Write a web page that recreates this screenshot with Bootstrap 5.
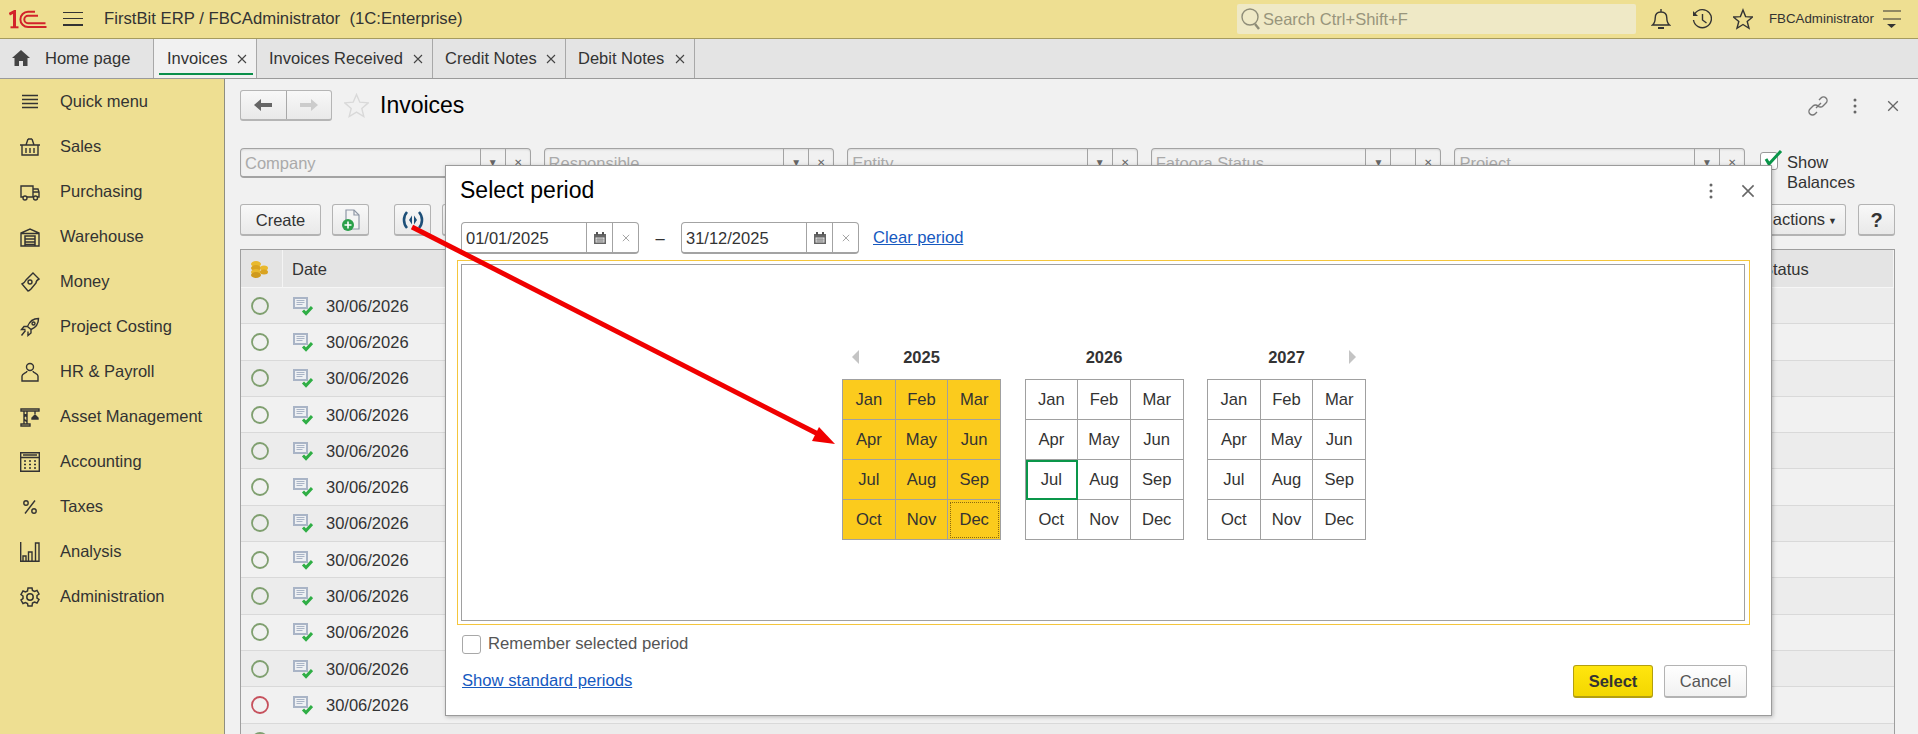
<!DOCTYPE html>
<html lang="en">
<head>
<meta charset="utf-8">
<title>Invoices</title>
<link href="https://cdn.jsdelivr.net/npm/bootstrap@5.3.0/dist/css/bootstrap.min.css" rel="stylesheet">
<style>
html,body{height:734px;overflow:hidden}
body{font-family:"Liberation Sans",Arial,sans-serif;font-size:16.5px;color:#333;background:#f1f1f1;position:relative;line-height:20px}
.ico{display:block;flex:none;fill:none;stroke:#333;stroke-width:1.4}
.top-bar{height:39px;background:#eedf92;border-bottom:1px solid #a59b5f}
.logo-wrap{width:63px;padding-left:9px}
.burger{width:20px;margin-right:21px}
.app-title{font-size:16.7px;white-space:pre;width:1133px}
.search-box{width:399px;height:30px;background:#efe9c6;border-radius:2px;padding-left:4px}
.search-box input{border:0;background:transparent;outline:0;font-size:16.5px;padding:0;margin-left:2px;width:360px;color:#333}
.search-box input::placeholder{color:#98957c}
.top-icons{margin-left:15px;gap:21px}
.top-user{font-size:13.3px;margin-left:16px;width:105px}
.top-menu{margin-left:9px}
.tab-bar{height:40px;background:#e4e4e4;border-bottom:1px solid #9a9a9a}
.tab-item{height:39px;border-right:1px solid #a8a8a8;position:relative;color:#333;padding-bottom:2px}
.tab-home{width:154px;padding-left:12px;gap:15px}
.tab-1{width:103px;padding-left:13px;background:#f1f1f1}
.tab-2{width:176px;padding-left:12px}
.tab-3{width:133px;padding-left:12px}
.tab-4{width:129px;padding-left:12px}
.tab-x{margin-left:auto;margin-right:9px;margin-top:2px}
.tab-mark{position:absolute;left:5px;right:3px;top:34px;height:2px;background:#0a8f4a}
.side-panel{width:225px;height:655px;background:#eedf92;border-right:1px solid #8f8f80;flex:none}
.side-item{height:45px;padding-left:20px;gap:20px;color:#333}
.side-item span{margin-top:-2px}
.work{flex:1;padding:11px 23px 0 15px;min-width:0}
.nav-group{width:92px;height:31px;border:1px solid #b5b5b5;border-bottom-width:2px;border-radius:3px;background:linear-gradient(#f8f8f8,#e9e9e9)}
.nav-group>span{flex:1;height:100%}
.nav-group>span+span{border-left:1px solid #a8a8a8}
.page-title{font-size:23px;line-height:30px;color:#000;margin-left:11px;margin-top:-2px}
.page-star{margin-left:12px}
.head-row{height:31px}
.head-tools{margin-right:-4px}
.head-link{margin-right:25px}
.head-dots{margin-right:30px}
.filter-row{height:30px;margin-top:27px;gap:0}
.filters{width:1505px;gap:13px;flex:none}
.fld{flex:1;height:30px;border:1px solid #a3a3a3;border-bottom-width:2px;border-radius:4px;background:#f1f1f1;color:#aaa;box-shadow:inset 0 1px 2px rgba(0,0,0,.1);min-width:0}
.fld-label{flex:1;padding-left:4px;white-space:nowrap;overflow:hidden}
.fld-btn{width:25px;height:100%;border-left:1px solid #a3a3a3;color:#666;font-size:10px}
.bal{margin-left:15px;gap:9px;padding-top:4px;align-items:flex-start;position:relative}
.bal-box{width:18px;height:18px;border:1px solid #999;border-radius:3px;background:#fff;flex:none;position:relative}
.bal-check{position:absolute;left:3px;top:-3px}
.bal-text{width:90px;line-height:20px}
.tool-row{height:32px;margin-top:26px}
.erp-btn{height:32px;padding:0;border:1px solid #b3b3b3;border-bottom-width:2px;border-radius:3px;background:linear-gradient(#f8f8f8,#e9e9e9);font-size:16.5px;line-height:20px;color:#333}
.erp-btn:hover{background:linear-gradient(#f8f8f8,#e9e9e9);border-color:#b3b3b3;color:#333}
.b-create{width:81px;margin-right:11px}
.b-sq{width:37px}
.b-radio{margin-left:25px;margin-right:11px}
.b-all{width:120px;margin-left:auto;margin-right:12px;text-align:right;padding-right:8px}
.b-caret{font-size:9px;margin-left:3px;vertical-align:1px}
.b-help{width:37px;font-weight:700;font-size:20px}
.grid-wrap{margin-top:13px;border:1px solid #9e9e9e;border-bottom:0;height:490px;overflow:hidden;background:#f1f1f1}
.erp-table{width:100%;table-layout:fixed;border-collapse:separate;border-spacing:0;margin:0;--bs-table-bg:transparent}
.erp-table th{height:38px;background:#e4e4e4;font-weight:400;padding:0 0 0 9px;border:0;border-right:1px solid #f4f4f4;border-bottom:1px solid #f6f6f6;vertical-align:middle;color:#333}
.erp-table td{height:36.3px;padding:0;border:0;border-bottom:1px solid #d9d9d9;vertical-align:middle;color:#333;line-height:20px}
.erp-table tbody tr:nth-child(odd) td{background:#ececec}
.erp-table tbody tr:nth-child(even) td{background:#f1f1f1}
.erp-table th.c3{padding-left:13px}
.c1{width:42px}
.c3{width:145px}
.dot{margin-left:10px}
.date-cell{padding-left:10px;gap:13px}
.dlg{position:absolute;left:445px;top:165px;width:1327px;height:551px;background:#fff;border:1px solid #9b9b9b;box-shadow:1px 1px 4px rgba(0,0,0,.25);padding:0 21px 0 11px}
.dlg-head{height:56px;padding-left:3px}
.dlg-title{font-size:23px;line-height:30px;color:#000;margin-top:-8px}
.dlg-tools{margin-left:auto;gap:28px;margin-right:-5px;margin-top:-6px}
.date-row{height:32px;padding-left:4px}
.date-fld{width:178px;height:32px;border:1px solid #a3a3a3;border-bottom-width:2px;border-radius:4px;background:#fff}
.date-fld .dv{flex:1;padding-left:4px}
.date-fld .db{width:26px;height:100%;border-left:1px solid #a3a3a3}
.date-dash{width:42px;text-align:center}
.clear-lnk{margin-left:14px;font-size:16.6px;color:#1659bf;text-decoration:underline}
.frame-out{margin-top:6px;height:365px;border:1px solid #f5c63d;padding:3px 4px 3px 3px;margin-left:0}
.frame-in{height:100%;border:1px solid #a0a0a0;gap:23.5px;padding-left:2px}
.cal-head{height:34px;padding:0 10px 11px}
.cal-side{flex:1}
.cal-year{font-weight:700;font-size:16.5px}
.cal-grid{width:159px;display:grid;grid-template-columns:repeat(3,1fr);grid-auto-rows:40px;border-top:1px solid #a0a0a0;border-left:1px solid #a0a0a0}
.cal-cell{border-right:1px solid #a0a0a0;border-bottom:1px solid #a0a0a0;color:#333;font-size:16.6px;position:relative}
.cal-sel{background:#fbcb1d}
.cal-now{outline:2px solid #0a964a;outline-offset:-2px}
.cal-foc{outline:1px dotted #8a6a10;outline-offset:-3px}
.tri-l{width:0;height:0;border-style:solid;border-width:7px 7px 7px 0;border-color:transparent #c4c4c4 transparent transparent}
.tri-r{width:0;height:0;border-style:solid;border-width:7px 0 7px 7px;border-color:transparent transparent transparent #c4c4c4}
.rem-row{margin-top:10px;padding-left:5px;gap:7px;height:18px;color:#555;font-size:16.7px}
.rem-box{width:19px;height:19px;border:1px solid #a8a8a8;border-radius:3px;background:#fff}
.foot-row{height:34px;margin-top:11px;padding-left:5px}
.show-lnk{color:#1659bf;text-decoration:underline;font-size:16.65px}
.b-select{width:80px;height:33px;background:linear-gradient(#ffe60f,#f3d700);border:1px solid #b39f10;border-bottom-width:2px;border-radius:3px;font-weight:700;color:#333;padding:0;font-size:16.5px;margin-left:auto;margin-right:11px;margin-top:1px}
.b-select:hover{background:linear-gradient(#ffe60f,#f3d700);border-color:#b39f10;color:#333}
.b-cancel{width:83px;height:33px;background:linear-gradient(#fff,#f1f1f1);color:#555;padding:0;margin-right:3px;margin-top:1px}
.b-cancel:hover{background:linear-gradient(#fff,#f1f1f1);color:#555}
.arrow-layer{position:absolute;left:0;top:0;pointer-events:none}
</style>
</head>
<body>
<svg class="d-none" xmlns="http://www.w3.org/2000/svg">
  <symbol id="x" viewBox="0 0 10 10"><path d="M1 1l8 8M9 1l-8 8" fill="none" stroke="currentColor" stroke-width="1.1"/></symbol>
  <symbol id="dots" viewBox="0 0 4 18"><circle cx="2" cy="3" r="1.5" fill="#666" stroke="none"/><circle cx="2" cy="9" r="1.5" fill="#666" stroke="none"/><circle cx="2" cy="15" r="1.5" fill="#666" stroke="none"/></symbol>
  <symbol id="cal" viewBox="0 0 14 14"><path d="M1 3h12v10H1z" fill="#666" stroke="none"/><path d="M3 1h2v3H3zM9 1h2v3H9z" fill="#555" stroke="none"/><path d="M2.500 6.500h9v5h-9z" fill="#eee" stroke="none"/><path d="M2.500 8.200h9M2.500 10h9M5 6.500v5M7 6.500v5M9 6.500v5" stroke="#666" stroke-width=".6" fill="none"/></symbol>
  <symbol id="doc" viewBox="0 0 20 20"><path d="M0 1h15v12H0z" fill="#a9b4c6" stroke="none"/><path d="M2 3h11v8H2z" fill="#eef0f3" stroke="none"/><path d="M3.500 4.500h8M3.500 6.500h8M3.500 8.500h6" stroke="#a9b4c6" stroke-width="1.100" fill="none"/><path d="M10 14.500l3 3 6-6.500" stroke="#2fae45" stroke-width="3" fill="none"/></symbol>
  <symbol id="ok" viewBox="0 0 18 18"><circle cx="9" cy="9" r="8" fill="none" stroke="#7f9f6f" stroke-width="1.800"/></symbol>
  <symbol id="bad" viewBox="0 0 18 18"><circle cx="9" cy="9" r="8" fill="none" stroke="#c6505c" stroke-width="1.800"/></symbol>
</svg>

<header class="top-bar d-flex align-items-center">
  <div class="logo-wrap">
    <svg class="ico" width="38" height="19" viewBox="0 0 38 19" style="stroke:#d2232a"><path d="M.3 4.200L5.500 1.500V18" stroke-width="3"/><path d="M1.500 17.300h8" stroke-width="2"/><path d="M26 1.800H19a7.600 7.600 0 0 0 0 15.200H37.500" stroke-width="2"/><path d="M29 5.800H19a3.600 3.600 0 0 0 0 7.400H36.500" stroke-width="2"/></svg>
  </div>
  <div class="burger"><svg class="ico" width="20" height="16" viewBox="0 0 20 16"><path d="M0 1.500h20M0 7.500h20" stroke-width="1.200"/><path d="M0 14h20" stroke-width="2"/></svg></div>
  <div class="app-title">FirstBit ERP / FBCAdministrator  (1C:Enterprise)</div>
  <div class="search-box d-flex align-items-center">
    <svg class="ico" width="20" height="24" viewBox="0 0 20 24" style="stroke:#8f8d78"><circle cx="9" cy="10" r="8"/><path d="M14 17l4 5" stroke-width="2.400"/></svg>
    <input type="text" placeholder="Search Ctrl+Shift+F" aria-label="Search">
  </div>
  <div class="top-icons d-flex align-items-center">
    <svg class="ico" width="20" height="22" viewBox="0 0 20 22"><path d="M1.500 17c2.500-2 2.700-4 2.700-7 0-3.500 2.200-6 5.800-6s5.800 2.500 5.800 6c0 3 .2 5 2.700 7zM10 1v3"/><path d="M7 20h6" stroke-width="2"/></svg>
    <svg class="ico" width="20" height="22" viewBox="0 0 20 22"><path d="M3 5.500A9 9 0 1 1 1.500 12"/><path d="M1 3v5h5" fill="#333" stroke="none"/><path d="M10.500 6v6l4 3"/></svg>
    <svg class="ico" width="20" height="22" viewBox="0 0 20 22"><path d="M10 2l2.600 6.600 7 .4-5.400 4.500 1.800 6.800-6-3.800-6 3.800 1.800-6.800L.4 9l7-.4z"/></svg>
  </div>
  <div class="top-user">FBCAdministrator</div>
  <svg class="ico top-menu" width="18" height="20" viewBox="0 0 18 20"><path d="M0 2h18M0 10h18" stroke-width="1.200"/><path d="M4 15h9l-4.500 4z" fill="#333" stroke="none"/></svg>
</header>

<nav class="tab-bar d-flex">
  <div class="tab-item tab-home d-flex align-items-center">
    <svg class="ico" width="18" height="16" viewBox="0 0 18 16" style="stroke:none;fill:#444"><path d="M9 0l9 8h-2.500v8h-4.500v-5H7v5H2.500V8H0z"/></svg>
    <span>Home page</span>
  </div>
  <div class="tab-item tab-1 d-flex align-items-center"><span>Invoices</span><svg class="tab-x" width="10" height="10" color="#444"><use href="#x"/></svg><span class="tab-mark"></span></div>
  <div class="tab-item tab-2 d-flex align-items-center"><span>Invoices Received</span><svg class="tab-x" width="10" height="10" color="#444"><use href="#x"/></svg></div>
  <div class="tab-item tab-3 d-flex align-items-center"><span>Credit Notes</span><svg class="tab-x" width="10" height="10" color="#444"><use href="#x"/></svg></div>
  <div class="tab-item tab-4 d-flex align-items-center"><span>Debit Notes</span><svg class="tab-x" width="10" height="10" color="#444"><use href="#x"/></svg></div>
</nav>

<div class="d-flex">
  <aside class="side-panel">
    <div class="side-item d-flex align-items-center"><svg class="ico" width="20" height="20" viewBox="0 0 20 20"><path d="M2 3.500h16M2 7.500h16M2 11.500h16M2 15.500h16"/></svg><span>Quick menu</span></div>
    <div class="side-item d-flex align-items-center"><svg class="ico" width="20" height="20" viewBox="0 0 20 20"><path d="M0 8h20M2 8v10h16V8M6 8l2-6M14 8l-2-6M8 2h4M6 11v5M10 11v5M14 11v5"/></svg><span>Sales</span></div>
    <div class="side-item d-flex align-items-center"><svg class="ico" width="20" height="20" viewBox="0 0 20 20"><path d="M3 15H1V4h12v11H7M13 7h5l1 3v5h-2M13 15h1M13 10h6"/><circle cx="5" cy="16" r="2"/><circle cx="15.500" cy="16" r="2"/></svg><span>Purchasing</span></div>
    <div class="side-item d-flex align-items-center"><svg class="ico" width="20" height="20" viewBox="0 0 20 20"><path d="M1 19V6l9-4 9 4v13zM1 6.500h18"/><path d="M5 19V9h10v10M5 12h10M5 15h10M5 17.500h10" stroke-width="1.500"/></svg><span>Warehouse</span></div>
    <div class="side-item d-flex align-items-center"><svg class="ico" width="20" height="20" viewBox="0 0 20 20"><path d="M13 1l6 6c-2 1-3 2-3 4l-5 6c-1 1-2 2-3 2l-6-7c2-1 3-2 4-4z"/><circle cx="10" cy="10" r="2"/></svg><span>Money</span></div>
    <div class="side-item d-flex align-items-center"><svg class="ico" width="20" height="20" viewBox="0 0 20 20"><path d="M18.500 1.500c-5 0-9 3-11 8l3.500 3c5-2 7.500-6 7.500-11zM7.500 9.500H4l-2.500 3h4M11 12.500V16l-3 2.500v-4M5.500 13.500l-4 5"/><circle cx="13.500" cy="6.500" r="1.500"/></svg><span>Project Costing</span></div>
    <div class="side-item d-flex align-items-center"><svg class="ico" width="20" height="20" viewBox="0 0 20 20"><circle cx="10" cy="5" r="3.500"/><path d="M7 9c0 2-5 2.500-5 5v5h16v-5c0-2.500-5-3-5-5"/></svg><span>HR &amp; Payroll</span></div>
    <div class="side-item d-flex align-items-center"><svg class="ico" width="20" height="20" viewBox="0 0 20 20"><path d="M1 2h18v2H1zM4 4v13M7 4v13M1 17h9v2H1zM4 7l3 3M7 7l-3 3M4 12l3 3M15 4v3"/><path d="M12 11l3-3 3 3v1h-6z" fill="#333"/></svg><span>Asset Management</span></div>
    <div class="side-item d-flex align-items-center"><svg class="ico" width="20" height="20" viewBox="0 0 20 20"><path d="M.7.700h18.600v18.600H.7zM.7 5.500h18.600"/><path d="M3 3h14M4 9h2M9 9h2M14 9h2M4 12.500h2M9 12.500h2M14 12.500h2M4 16h2M9 16h2M14 16h2"/></svg><span>Accounting</span></div>
    <div class="side-item d-flex align-items-center"><svg class="ico" width="20" height="20" viewBox="0 0 20 20"><circle cx="6" cy="6" r="2.200"/><circle cx="14" cy="14" r="2.200"/><path d="M15 3.500L5 16.500"/></svg><span>Taxes</span></div>
    <div class="side-item d-flex align-items-center"><svg class="ico" width="20" height="20" viewBox="0 0 20 20"><path d="M.7 0v19.300H19V1h-3.500v18M3 19v-5h3v5M8.500 19v-9H12v9"/></svg><span>Analysis</span></div>
    <div class="side-item d-flex align-items-center"><svg class="ico" width="20" height="20" viewBox="0 0 20 20" style="stroke-width:1.500"><path d="M8 1h4l.5 2.500 2 1 2.500-1 2 3.500-2 1.500v2.500l2 1.500-2 3.500-2.500-1-2 1L12 19H8l-.5-2.500-2-1-2.500 1-2-3.500 2-1.500V9L1 7.500 3 4l2.500 1 2-1z"/><circle cx="10" cy="10" r="3.200"/></svg><span>Administration</span></div>
  </aside>

  <main class="work">
    <div class="head-row d-flex align-items-center">
      <div class="nav-group d-flex">
        <span class="d-flex align-items-center justify-content-center"><svg class="ico" width="18" height="14" viewBox="0 0 18 14" style="stroke:none;fill:#666"><path d="M0 7l7-6v4h11v4H7v4z"/></svg></span>
        <span class="d-flex align-items-center justify-content-center"><svg class="ico" width="18" height="14" viewBox="0 0 18 14" style="stroke:none;fill:#ccc"><path d="M18 7l-7-6v4H0v4h11v4z"/></svg></span>
      </div>
      <svg class="ico page-star" width="25" height="25" viewBox="0 0 25 25" style="stroke:#d9d9d9"><path d="M12.500 1.500l3.300 7.700 8.400.7-6.400 5.500 2 8.100-7.300-4.400-7.300 4.400 2-8.100L.8 9.900l8.400-.7z"/></svg>
      <div class="page-title">Invoices</div>
      <div class="head-tools ms-auto d-flex align-items-center">
        <svg class="ico head-link" width="20" height="20" viewBox="0 0 20 20" style="stroke:#777"><path d="M8 12l5-5M11 4l2-2a3.500 3.500 0 0 1 5 5l-3 3a3.500 3.500 0 0 1-5 0M9 16l-2 2a3.500 3.500 0 0 1-5-5l3-3a3.500 3.500 0 0 1 5 0"/></svg>
        <svg class="head-dots" width="4" height="18"><use href="#dots"/></svg>
        <svg width="12" height="12" color="#666"><use href="#x"/></svg>
      </div>
    </div>

    <div class="filter-row d-flex">
      <div class="filters d-flex">
        <div class="fld d-flex align-items-center"><span class="fld-label">Company</span><span class="fld-btn d-flex align-items-center justify-content-center">▼</span><span class="fld-btn d-flex align-items-center justify-content-center">✕</span></div>
        <div class="fld d-flex align-items-center"><span class="fld-label">Responsible</span><span class="fld-btn d-flex align-items-center justify-content-center">▼</span><span class="fld-btn d-flex align-items-center justify-content-center">✕</span></div>
        <div class="fld d-flex align-items-center"><span class="fld-label">Entity</span><span class="fld-btn d-flex align-items-center justify-content-center">▼</span><span class="fld-btn d-flex align-items-center justify-content-center">✕</span></div>
        <div class="fld d-flex align-items-center"><span class="fld-label">Fatoora Status</span><span class="fld-btn d-flex align-items-center justify-content-center">▼</span><span class="fld-btn"></span><span class="fld-btn d-flex align-items-center justify-content-center">✕</span></div>
        <div class="fld d-flex align-items-center"><span class="fld-label">Project</span><span class="fld-btn d-flex align-items-center justify-content-center">▼</span><span class="fld-btn d-flex align-items-center justify-content-center">✕</span></div>
      </div>
      <div class="bal d-flex">
        <span class="bal-box"><svg class="bal-check" width="19" height="16" viewBox="0 0 19 16" fill="none" stroke="#0a964a" stroke-width="3"><path d="M2 9l3 5L17 1"/></svg></span>
        <span class="bal-text">Show Balances</span>
      </div>
    </div>

    <div class="tool-row d-flex">
      <button type="button" class="btn erp-btn b-create">Create</button>
      <button type="button" class="btn erp-btn b-sq d-flex align-items-center justify-content-center">
        <svg width="20" height="24" viewBox="0 0 20 24"><path d="M5 2h8l5 5v14H5z" fill="#f4f4f4" stroke="#8d96a5" stroke-width="1.200"/><path d="M13 2v5h5" fill="none" stroke="#8d96a5" stroke-width="1.200"/><circle cx="7" cy="17" r="6" fill="#2ba04a"/><path d="M7 13.500v7M3.500 17h7" stroke="#fff" stroke-width="1.600"/></svg>
      </button>
      <button type="button" class="btn erp-btn b-sq b-radio d-flex align-items-center justify-content-center">
        <svg width="24" height="20" viewBox="0 0 24 20" fill="none" stroke="#1d4f78" stroke-width="2.600"><path d="M6 2c-4 4.500-4 11.500 0 16M18 2c4 4.500 4 11.500 0 16"/><path d="M11 5.500l-3 4.500 3 4.500zM13 5.500l3 4.500-3 4.500z" fill="#1d4f78" stroke="none"/></svg>
      </button>
      <button type="button" class="btn erp-btn b-sq"></button>
      <button type="button" class="btn erp-btn b-all">All actions<span class="b-caret">▼</span></button>
      <button type="button" class="btn erp-btn b-help">?</button>
    </div>

    <div class="grid-wrap">
      <table class="table erp-table">
        <thead>
          <tr>
            <th class="c1"><svg class="d-block" width="18" height="18" viewBox="0 0 18 18"><ellipse cx="6" cy="4" rx="5" ry="3" fill="#e9b92e"/><ellipse cx="6" cy="8" rx="5" ry="3" fill="#d9a321"/><ellipse cx="6" cy="12" rx="5" ry="3" fill="#e9b92e"/><ellipse cx="6" cy="15" rx="5" ry="3" fill="#cf9a1d"/><ellipse cx="14" cy="8" rx="4" ry="2.500" fill="#e9b92e"/><ellipse cx="14" cy="12" rx="4" ry="2.500" fill="#d9a321"/></svg></th>
            <th>Date</th>
            <th class="c3">Status</th>
          </tr>
        </thead>
        <tbody>
          <tr><td><svg class="dot d-block" width="18" height="18"><use href="#ok"/></svg></td><td><div class="date-cell d-flex align-items-center"><svg width="20" height="20"><use href="#doc"/></svg>30/06/2026</div></td><td></td></tr>
          <tr><td><svg class="dot d-block" width="18" height="18"><use href="#ok"/></svg></td><td><div class="date-cell d-flex align-items-center"><svg width="20" height="20"><use href="#doc"/></svg>30/06/2026</div></td><td></td></tr>
          <tr><td><svg class="dot d-block" width="18" height="18"><use href="#ok"/></svg></td><td><div class="date-cell d-flex align-items-center"><svg width="20" height="20"><use href="#doc"/></svg>30/06/2026</div></td><td></td></tr>
          <tr><td><svg class="dot d-block" width="18" height="18"><use href="#ok"/></svg></td><td><div class="date-cell d-flex align-items-center"><svg width="20" height="20"><use href="#doc"/></svg>30/06/2026</div></td><td></td></tr>
          <tr><td><svg class="dot d-block" width="18" height="18"><use href="#ok"/></svg></td><td><div class="date-cell d-flex align-items-center"><svg width="20" height="20"><use href="#doc"/></svg>30/06/2026</div></td><td></td></tr>
          <tr><td><svg class="dot d-block" width="18" height="18"><use href="#ok"/></svg></td><td><div class="date-cell d-flex align-items-center"><svg width="20" height="20"><use href="#doc"/></svg>30/06/2026</div></td><td></td></tr>
          <tr><td><svg class="dot d-block" width="18" height="18"><use href="#ok"/></svg></td><td><div class="date-cell d-flex align-items-center"><svg width="20" height="20"><use href="#doc"/></svg>30/06/2026</div></td><td></td></tr>
          <tr><td><svg class="dot d-block" width="18" height="18"><use href="#ok"/></svg></td><td><div class="date-cell d-flex align-items-center"><svg width="20" height="20"><use href="#doc"/></svg>30/06/2026</div></td><td></td></tr>
          <tr><td><svg class="dot d-block" width="18" height="18"><use href="#ok"/></svg></td><td><div class="date-cell d-flex align-items-center"><svg width="20" height="20"><use href="#doc"/></svg>30/06/2026</div></td><td></td></tr>
          <tr><td><svg class="dot d-block" width="18" height="18"><use href="#ok"/></svg></td><td><div class="date-cell d-flex align-items-center"><svg width="20" height="20"><use href="#doc"/></svg>30/06/2026</div></td><td></td></tr>
          <tr><td><svg class="dot d-block" width="18" height="18"><use href="#ok"/></svg></td><td><div class="date-cell d-flex align-items-center"><svg width="20" height="20"><use href="#doc"/></svg>30/06/2026</div></td><td></td></tr>
          <tr><td><svg class="dot d-block" width="18" height="18"><use href="#bad"/></svg></td><td><div class="date-cell d-flex align-items-center"><svg width="20" height="20"><use href="#doc"/></svg>30/06/2026</div></td><td></td></tr>
          <tr><td><svg class="dot d-block" width="18" height="18"><use href="#ok"/></svg></td><td></td><td></td></tr>
        </tbody>
      </table>
    </div>
  </main>
</div>

<section class="dlg">
  <div class="dlg-head d-flex align-items-center">
    <div class="dlg-title">Select period</div>
    <div class="dlg-tools d-flex align-items-center">
      <svg width="4" height="18"><use href="#dots"/></svg>
      <svg width="14" height="14" color="#666"><use href="#x"/></svg>
    </div>
  </div>
  <div class="date-row d-flex align-items-center">
    <div class="date-fld d-flex align-items-center"><span class="dv">01/01/2025</span><span class="db d-flex align-items-center justify-content-center"><svg width="14" height="14"><use href="#cal"/></svg></span><span class="db d-flex align-items-center justify-content-center"><svg width="8" height="8" color="#999"><use href="#x"/></svg></span></div>
    <span class="date-dash">–</span>
    <div class="date-fld d-flex align-items-center"><span class="dv">31/12/2025</span><span class="db d-flex align-items-center justify-content-center"><svg width="14" height="14"><use href="#cal"/></svg></span><span class="db d-flex align-items-center justify-content-center"><svg width="8" height="8" color="#999"><use href="#x"/></svg></span></div>
    <a class="clear-lnk" href="#">Clear period</a>
  </div>
  <div class="frame-out">
    <div class="frame-in d-flex align-items-center justify-content-center">
      <div>
        <div class="cal-head d-flex align-items-center"><span class="cal-side"><span class="tri-l d-block"></span></span><span class="cal-year">2025</span><span class="cal-side"></span></div>
        <div class="cal-grid">
          <div class="cal-cell cal-sel d-flex align-items-center justify-content-center">Jan</div><div class="cal-cell cal-sel d-flex align-items-center justify-content-center">Feb</div><div class="cal-cell cal-sel d-flex align-items-center justify-content-center">Mar</div>
          <div class="cal-cell cal-sel d-flex align-items-center justify-content-center">Apr</div><div class="cal-cell cal-sel d-flex align-items-center justify-content-center">May</div><div class="cal-cell cal-sel d-flex align-items-center justify-content-center">Jun</div>
          <div class="cal-cell cal-sel d-flex align-items-center justify-content-center">Jul</div><div class="cal-cell cal-sel d-flex align-items-center justify-content-center">Aug</div><div class="cal-cell cal-sel d-flex align-items-center justify-content-center">Sep</div>
          <div class="cal-cell cal-sel d-flex align-items-center justify-content-center">Oct</div><div class="cal-cell cal-sel d-flex align-items-center justify-content-center">Nov</div><div class="cal-cell cal-sel cal-foc d-flex align-items-center justify-content-center">Dec</div>
        </div>
      </div>
      <div>
        <div class="cal-head d-flex align-items-center justify-content-center"><span class="cal-year">2026</span></div>
        <div class="cal-grid">
          <div class="cal-cell d-flex align-items-center justify-content-center">Jan</div><div class="cal-cell d-flex align-items-center justify-content-center">Feb</div><div class="cal-cell d-flex align-items-center justify-content-center">Mar</div>
          <div class="cal-cell d-flex align-items-center justify-content-center">Apr</div><div class="cal-cell d-flex align-items-center justify-content-center">May</div><div class="cal-cell d-flex align-items-center justify-content-center">Jun</div>
          <div class="cal-cell cal-now d-flex align-items-center justify-content-center">Jul</div><div class="cal-cell d-flex align-items-center justify-content-center">Aug</div><div class="cal-cell d-flex align-items-center justify-content-center">Sep</div>
          <div class="cal-cell d-flex align-items-center justify-content-center">Oct</div><div class="cal-cell d-flex align-items-center justify-content-center">Nov</div><div class="cal-cell d-flex align-items-center justify-content-center">Dec</div>
        </div>
      </div>
      <div>
        <div class="cal-head d-flex align-items-center"><span class="cal-side"></span><span class="cal-year">2027</span><span class="cal-side d-flex justify-content-end"><span class="tri-r d-block"></span></span></div>
        <div class="cal-grid">
          <div class="cal-cell d-flex align-items-center justify-content-center">Jan</div><div class="cal-cell d-flex align-items-center justify-content-center">Feb</div><div class="cal-cell d-flex align-items-center justify-content-center">Mar</div>
          <div class="cal-cell d-flex align-items-center justify-content-center">Apr</div><div class="cal-cell d-flex align-items-center justify-content-center">May</div><div class="cal-cell d-flex align-items-center justify-content-center">Jun</div>
          <div class="cal-cell d-flex align-items-center justify-content-center">Jul</div><div class="cal-cell d-flex align-items-center justify-content-center">Aug</div><div class="cal-cell d-flex align-items-center justify-content-center">Sep</div>
          <div class="cal-cell d-flex align-items-center justify-content-center">Oct</div><div class="cal-cell d-flex align-items-center justify-content-center">Nov</div><div class="cal-cell d-flex align-items-center justify-content-center">Dec</div>
        </div>
      </div>
    </div>
  </div>
  <div class="rem-row d-flex align-items-center"><span class="rem-box"></span><span>Remember selected period</span></div>
  <div class="foot-row d-flex align-items-center">
    <a class="show-lnk" href="#">Show standard periods</a>
    <button type="button" class="btn b-select">Select</button>
    <button type="button" class="btn erp-btn b-cancel">Cancel</button>
  </div>
</section>

<svg class="arrow-layer" width="1918" height="734" viewBox="0 0 1918 734">
  <path d="M412 227L818 434" stroke="#f00000" stroke-width="5" fill="none"/>
  <path d="M835 444L812 441L819 427z" fill="#f00000"/>
</svg>

<script src="https://cdn.jsdelivr.net/npm/bootstrap@5.3.0/dist/js/bootstrap.bundle.min.js"></script>
</body>
</html>
